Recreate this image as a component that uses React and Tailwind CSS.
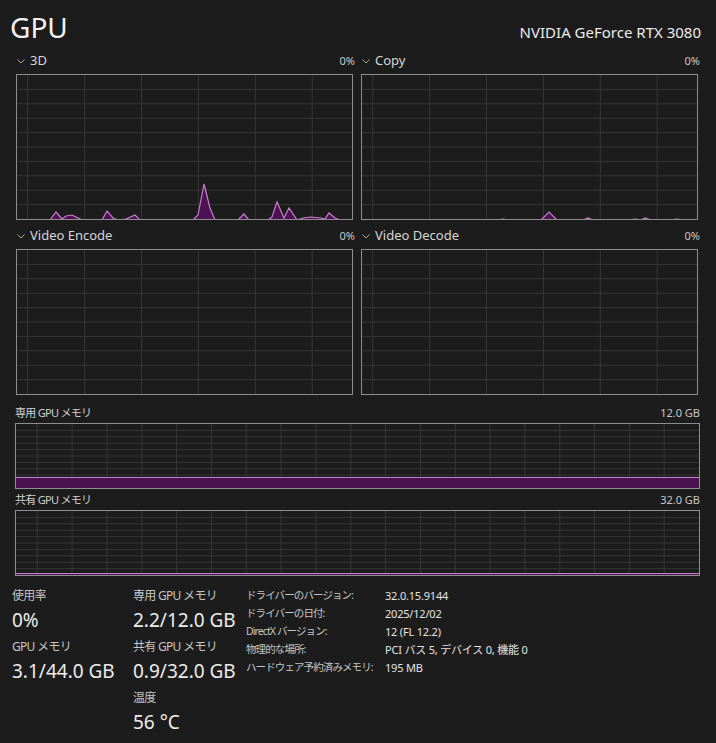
import React from "react";

const FONT = { fontFamily: '"Noto Sans", "Noto Sans CJK JP", sans-serif' };

const threeD = [
  [0, 146], [34, 146], [40, 138], [46, 145], [50, 142], [56, 141], [62, 144], [66, 146],
  [86, 146], [91, 137], [97, 144], [102, 146], [110, 145], [119, 141], [124, 146],
  [177, 146], [180, 143], [182, 141], [188, 110], [194, 134], [199, 146], [222, 146],
  [228, 140], [233, 146], [252, 146], [256, 143], [261, 128], [268, 144], [273, 134],
  [281, 146], [287, 144], [295, 143], [305, 144], [309, 145], [313, 139], [319, 144],
  [324, 146], [337, 146],
];

const copy = [
  [0, 146], [136, 146], [142, 145], [147, 146], [180, 146], [188, 138], [196, 146],
  [222, 146], [227, 144], [232, 146], [268, 146], [274, 145], [280, 146], [284, 144],
  [290, 146], [310, 146], [316, 145], [322, 146], [337, 146],
];

function Chevron() {
  return (
    <svg width="8" height="5" viewBox="0 0 8 5" className="shrink-0">
      <polyline points="0.5,0.5 4,4 7.5,0.5" fill="none" stroke="#a8a8a8" strokeWidth="1" />
    </svg>
  );
}

// grid + data drawn in outer-box coordinates (border included)
function Chart({ w, h, vStart, vStep, rows, points, band, className }) {
  const iw = w - 2;
  const ih = h - 2;
  const verts = [];
  for (let x = vStart - 1; x < iw; x += vStep) verts.push(x);
  const hors = [];
  for (let k = 1; k < rows; k++) hors.push((ih / rows) * k);
  const pts = points ? points.map(([x, y]) => `${x - 1},${y - 1}`).join(" ") : null;

  return (
    <div className={`border border-[#8e8e8e] ${className}`}>
      <svg width={iw} height={ih} viewBox={`0 0 ${iw} ${ih}`} className="block">
        {hors.map((y) => (
          <line key={"h" + y} x1="0" x2={iw} y1={y} y2={y} stroke="#353535" strokeWidth="1" />
        ))}
        {verts.map((x) => (
          <line key={"v" + x} x1={x} x2={x} y1="0" y2={ih} stroke="#363636" strokeWidth="1" />
        ))}
        {pts && (
          <>
            <polygon points={pts} fill="#4d1254" />
            <polyline points={pts} fill="none" stroke="#c680cc" strokeWidth="1.2" />
          </>
        )}
        {band && (
          <>
            <rect x="0" y={band - 1} width={iw} height={ih - band + 1} fill="#4d1254" fillOpacity="0.92" />
            <line x1="0" x2={iw} y1={band - 0.5} y2={band - 0.5} stroke="#c680cc" strokeWidth="1.2" />
          </>
        )}
      </svg>
    </div>
  );
}

function SmallGraph({ label, points }) {
  return (
    <div className="flex flex-col">
      <div className="h-[20px] flex items-center justify-between pl-[1px] -mr-[2px]">
        <div className="flex items-center gap-[5px] text-[13px] text-[#d6d6d6]">
          <Chevron />
          <span>{label}</span>
        </div>
        <span className="text-[11px] text-[#c8c8c8]">0%</span>
      </div>
      <Chart w={337} h={146} vStart={11.7} vStep={56.9} rows={10} points={points} className="mt-[3px] w-[337px] h-[146px]" />
    </div>
  );
}

function MemGraph({ label, total, band }) {
  return (
    <div className="flex flex-col ml-[15px] w-[685px]">
      <div className="h-[20px] flex items-center justify-between">
        <span className="text-[11px] tracking-[-0.7px] text-[#d0d0d0]">{label}</span>
        <span className="text-[11px] text-[#c8c8c8]">{total}</span>
      </div>
      <Chart w={685} h={66} vStart={22.3} vStep={34.83} rows={10} band={band} className="w-[685px] h-[66px]" />
    </div>
  );
}

function Stat({ label, value }) {
  return (
    <div className="flex flex-col mb-[6px]">
      <div className="h-[18px] leading-[18px] text-[12px] tracking-[-0.7px] text-[#c4c4c4] whitespace-nowrap">{label}</div>
      <div className="h-[24px] leading-[24px] mt-[3px] text-[19px] text-[#ececec] whitespace-nowrap">{value}</div>
    </div>
  );
}

const details = [
  ["ドライバーのバージョン:", "32.0.15.9144"],
  ["ドライバーの日付:", "2025/12/02"],
  ["DirectX バージョン:", "12 (FL 12.2)"],
  ["物理的な場所:", "PCI バス 5, デバイス 0, 機能 0"],
  ["ハードウェア予約済みメモリ:", "195 MB"],
];

export default function App() {
  return (
    <div className="w-[716px] h-[743px] overflow-hidden bg-[#1c1c1c] text-[#e6e6e6]" style={FONT}>
      {/* Header */}
      <div className="h-[51px] flex items-start justify-between pl-[10px] pr-[15px]">
        <h1 className="text-[28px] leading-[38px] mt-[8px] text-[#f2f2f2]">GPU</h1>
        <div className="text-[15px] leading-[20px] mt-[22px] text-[#ececec]">NVIDIA GeForce RTX 3080</div>
      </div>

      {/* Engine graphs */}
      <div className="grid grid-cols-[337px_337px] gap-x-[8px] gap-y-[6px] pl-[16px]">
        <SmallGraph label="3D" points={threeD} />
        <SmallGraph label="Copy" points={copy} />
        <SmallGraph label="Video Encode" />
        <SmallGraph label="Video Decode" />
      </div>

      {/* Memory graphs */}
      <div className="mt-[8px] flex flex-col gap-[1px]">
        <MemGraph label="専用 GPU メモリ" total="12.0 GB" band={54} />
        <MemGraph label="共有 GPU メモリ" total="32.0 GB" band={63} />
      </div>

      {/* Stats */}
      <div className="mt-[11px] flex">
        <div className="w-[133px] shrink-0 pl-[12px] flex flex-col">
          <Stat label="使用率" value="0%" />
          <Stat label="GPU メモリ" value="3.1/44.0 GB" />
        </div>
        <div className="w-[113px] shrink-0 flex flex-col">
          <Stat label="専用 GPU メモリ" value="2.2/12.0 GB" />
          <Stat label="共有 GPU メモリ" value="0.9/32.0 GB" />
          <Stat label="温度" value="56 °C" />
        </div>
        <div className="flex flex-col">
          {details.map(([k, v]) => (
            <div key={k} className="h-[18px] flex items-center whitespace-nowrap">
              <span className="w-[139px] shrink-0 text-[10.5px] tracking-[-0.9px] text-[#c4c4c4]">{k}</span>
              <span className="text-[11px] tracking-[-0.2px] text-[#e4e4e4]">{v}</span>
            </div>
          ))}
        </div>
      </div>
    </div>
  );
}
